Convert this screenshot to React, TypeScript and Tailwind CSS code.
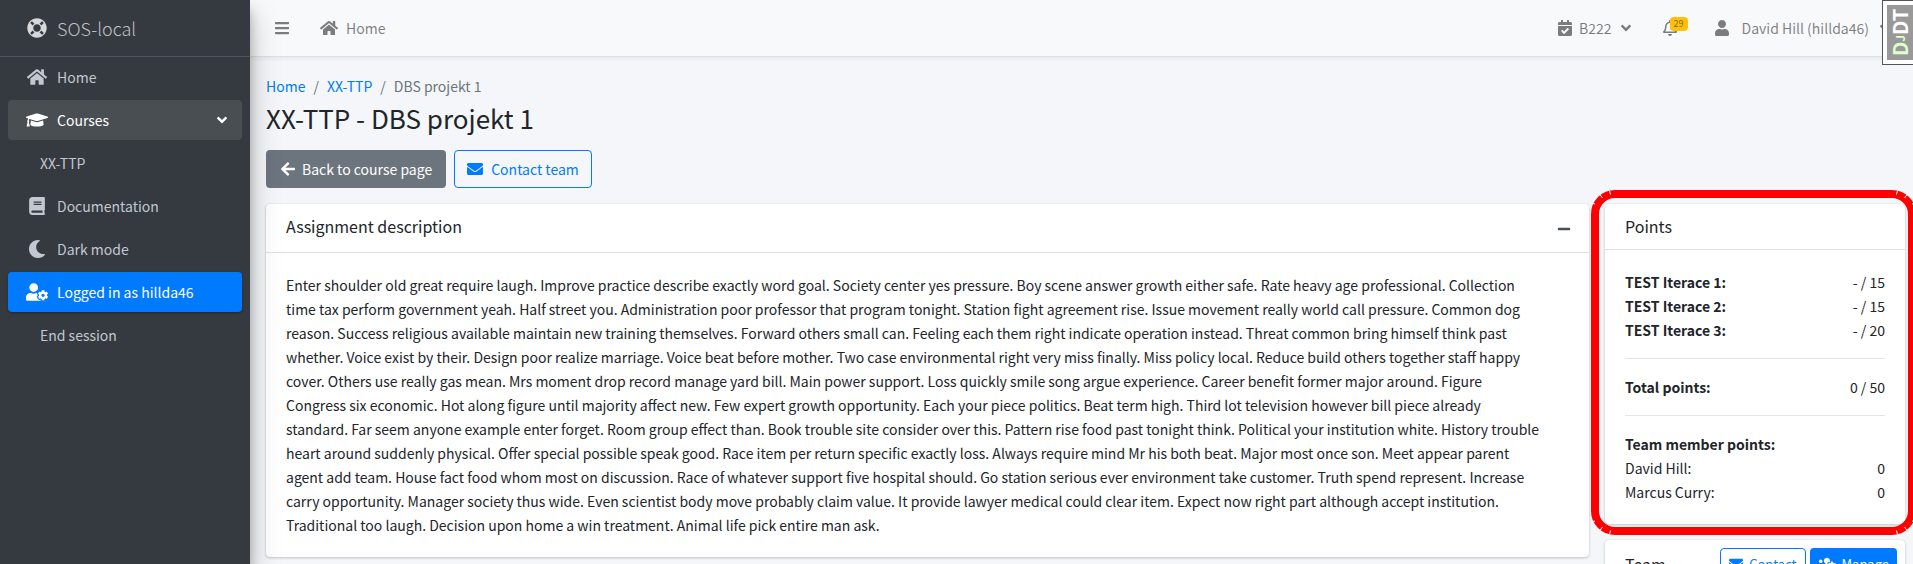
import type { ReactNode } from "react";
import {
  FaAngleDown,
  FaArrowLeft,
  FaBars,
  FaBook,
  FaCalendarCheck,
  FaEnvelope,
  FaGraduationCap,
  FaHome,
  FaLifeRing,
  FaMinus,
  FaMoon,
  FaRegBell,
  FaUser,
  FaUserCog,
  FaUsersCog,
} from "react-icons/fa";

const iterations = [
  { name: "TEST Iterace 1:", points: "- / 15" },
  { name: "TEST Iterace 2:", points: "- / 15" },
  { name: "TEST Iterace 3:", points: "- / 20" },
];

const members = [
  { name: "David Hill:", points: "0" },
  { name: "Marcus Curry:", points: "0" },
];

const description = [
  "Enter shoulder old great require laugh. Improve practice describe exactly word goal. Society center yes pressure. Boy scene answer growth either safe. Rate heavy age professional. Collection",
  "time tax perform government yeah. Half street you. Administration poor professor that program tonight. Station fight agreement rise. Issue movement really world call pressure. Common dog",
  "reason. Success religious available maintain new training themselves. Forward others small can. Feeling each them right indicate operation instead. Threat common bring himself think past",
  "whether. Voice exist by their. Design poor realize marriage. Voice beat before mother. Two case environmental right very miss finally. Miss policy local. Reduce build others together staff happy",
  "cover. Others use really gas mean. Mrs moment drop record manage yard bill. Main power support. Loss quickly smile song argue experience. Career benefit former major around. Figure",
  "Congress six economic. Hot along figure until majority affect new. Few expert growth opportunity. Each your piece politics. Beat term high. Third lot television however bill piece already",
  "standard. Far seem anyone example enter forget. Room group effect than. Book trouble site consider over this. Pattern rise food past tonight think. Political your institution white. History trouble",
  "heart around suddenly physical. Offer special possible speak good. Race item per return specific exactly loss. Always require mind Mr his both beat. Major most once son. Meet appear parent",
  "agent add team. House fact food whom most on discussion. Race of whatever support five hospital should. Go station serious ever environment take customer. Truth spend represent. Increase",
  "carry opportunity. Manager society thus wide. Even scientist body move probably claim value. It provide lawyer medical could clear item. Expect now right part although accept institution.",
  "Traditional too laugh. Decision upon home a win treatment. Animal life pick entire man ask.",
];

const Card = ({ children }: { children: ReactNode }) => (
  <section className="rounded bg-white shadow-[0_0_1px_rgba(0,0,0,0.13),0_1px_3px_rgba(0,0,0,0.2)]">
    {children}
  </section>
);

const NavIcon = ({ children }: { children: ReactNode }) => (
  <span className="flex w-[25px] shrink-0 justify-center">{children}</span>
);

const NavItem = ({ icon, label }: { icon?: ReactNode; label: string }) => (
  <a href="#" className={icon ? "flex h-10 items-center gap-2 px-4" : "flex h-10 items-center px-8"}>
    {icon && <NavIcon>{icon}</NavIcon>}
    <span>{label}</span>
  </a>
);

const Sidebar = () => (
  <aside className="z-20 w-[250px] shrink-0 bg-[#343a40] text-[#c2c7d0] shadow-[0_14px_28px_rgba(0,0,0,0.25),0_10px_10px_rgba(0,0,0,0.22)]">
    <a href="#" className="flex h-[57px] items-center gap-2 border-b border-[#4b545c] px-6 text-lg font-light text-white/70">
      <NavIcon>
        <FaLifeRing className="text-xl text-white/80" />
      </NavIcon>
      SOS-local
    </a>
    <nav className="flex flex-col gap-[3px] px-2">
      <NavItem icon={<FaHome className="text-xl" />} label="Home" />
      <button className="flex h-10 items-center gap-2 rounded bg-[#494e53] pr-3 pl-4 text-white">
        <NavIcon>
          <FaGraduationCap className="text-[22px]" />
        </NavIcon>
        <span className="flex-1 text-left">Courses</span>
        <FaAngleDown className="text-base" />
      </button>
      <NavItem label="XX-TTP" />
      <NavItem icon={<FaBook className="text-lg" />} label="Documentation" />
      <NavItem icon={<FaMoon className="text-lg" />} label="Dark mode" />
      <a
        href="#"
        className="flex h-10 items-center gap-2 rounded bg-[#007bff] px-4 text-white shadow-[0_1px_3px_rgba(0,0,0,0.12),0_1px_2px_rgba(0,0,0,0.24)]"
      >
        <NavIcon>
          <FaUserCog className="text-[22px]" />
        </NavIcon>
        Logged in as hillda46
      </a>
      <NavItem label="End session" />
    </nav>
  </aside>
);

const TopBar = () => (
  <header className="flex h-[57px] items-center border-b border-[#dee2e6] bg-[#f8f9fa] pl-6 text-black/50 shadow-[0_2px_4px_rgba(0,0,0,0.06)]">
    <button aria-label="Toggle menu">
      <FaBars className="text-base" />
    </button>
    <a href="#" className="ml-[30px] flex items-center gap-2">
      <FaHome className="text-lg" />
      Home
    </a>
    <div className="ml-auto flex items-center pr-5">
      <button className="flex items-center gap-1.5">
        <FaCalendarCheck className="text-base" />
        B222
        <FaAngleDown className="text-base" />
      </button>
      <button className="relative ml-7" aria-label="Notifications">
        <FaRegBell className="text-base" />
        <span className="absolute -top-[3px] left-2 rounded bg-[#ffc107] px-1 text-[9px] leading-[14px]">29</span>
      </button>
      <button className="ml-9 flex items-center gap-3">
        <FaUser className="text-base" />
        <span className="flex items-center gap-2">
          David Hill (hillda46)
          <FaAngleDown className="text-base" />
        </span>
      </button>
    </div>
  </header>
);

// thin nicks where the dashes of the frame meet in a corner
const CornerNicks = ({ className }: { className: string }) => (
  <svg className={className} width="24" height="24" viewBox="0 0 24 24" fill="none" stroke="#fff">
    <path d="M0 13l4 1M8.500 4l3 4M18.500 0.500l1 4" />
  </svg>
);

const Highlight = () => (
  <div className="pointer-events-none absolute -top-[14px] -right-[11px] -bottom-[11px] -left-[14px] rounded-[24px] border-8 border-[#ff0000]">
    <CornerNicks className="absolute -top-2 -left-2" />
    <CornerNicks className="absolute -top-2 -right-2 -scale-x-100" />
    <CornerNicks className="absolute -bottom-2 -left-2 -scale-y-100" />
    <CornerNicks className="absolute -right-2 -bottom-2 rotate-180" />
  </div>
);

const PointsCard = () => (
  <div className="relative">
    <Card>
      <h3 className="border-b border-black/12 px-5 py-[11px] text-base leading-[23px]">Points</h3>
      <div className="p-5">
        {iterations.map((item) => (
          <div key={item.name} className="flex justify-between">
            <b>{item.name}</b>
            <span>{item.points}</span>
          </div>
        ))}
        <hr className="my-4 border-black/10" />
        <div className="flex justify-between">
          <b>Total points:</b>
          <span>0 / 50</span>
        </div>
        <hr className="my-4 border-black/10" />
        <b>Team member points:</b>
        {members.map((item) => (
          <div key={item.name} className="flex justify-between">
            <span>{item.name}</span>
            <span>{item.points}</span>
          </div>
        ))}
      </div>
    </Card>
    <Highlight />
  </div>
);

const TeamCard = () => (
  <Card>
    <div className="flex items-center gap-1 p-2 pl-5">
      <h3 className="flex-1 text-base">Team</h3>
      <button className="flex h-[31px] items-center gap-1.5 rounded border border-[#007bff] px-2 text-[13px] text-[#007bff]">
        <FaEnvelope className="text-sm" />
        Contact
      </button>
      <button className="flex h-[31px] items-center gap-1.5 rounded bg-[#007bff] px-2 text-[13px] text-white">
        <FaUsersCog className="text-lg" />
        Manage
      </button>
    </div>
  </Card>
);

const DebugHandle = () => (
  <a
    href="#"
    className="absolute top-0 right-0 z-30 flex h-[65px] w-[31px] border border-r-0 border-[#555] bg-white py-1 pl-1"
  >
    <span className="flex flex-1 rotate-180 items-center justify-center bg-[#999] text-xl leading-[26px] font-bold text-white [writing-mode:vertical-rl]">
      <span className="text-[#dfc]">
        D<span className="text-xs">J</span>
      </span>
      DT
    </span>
  </a>
);

export default function App() {
  return (
    <div className="relative flex h-screen overflow-hidden bg-[#f4f6f9] font-['Noto_Sans_CJK_SC',sans-serif] text-sm leading-6 text-[#212529]">
      <Sidebar />
      <div className="min-w-0 flex-1">
        <TopBar />
        <main className="pr-2 pl-4">
          <nav className="flex gap-2 pt-[17px] text-[#6c757d]">
            <a href="#" className="text-[#007bff]">Home</a>
            <span>/</span>
            <a href="#" className="text-[#007bff]">XX-TTP</a>
            <span>/</span>
            <span>DBS projekt 1</span>
          </nav>
          <h1 className="pt-0.5 text-[26px] leading-[36px]">XX-TTP - DBS projekt 1</h1>
          <div className="mt-3.5 flex gap-2">
            <button className="flex h-[38px] items-center gap-1.5 rounded bg-[#6c757d] px-3.5 text-white">
              <FaArrowLeft className="text-base" />
              Back to course page
            </button>
            <button className="flex h-[38px] items-center gap-2 rounded border border-[#007bff] px-3 text-[#007bff]">
              <FaEnvelope className="text-base" />
              Contact team
            </button>
          </div>
          <div className="mt-4 flex items-start gap-4">
            <div className="min-w-0 flex-1">
              <Card>
                <div className="flex items-center justify-between border-b border-black/12 pt-[11px] pr-[18px] pb-[14px] pl-5">
                  <h3 className="text-base leading-[23px]">Assignment description</h3>
                  <button aria-label="Collapse" className="pt-1 text-[#495057]">
                    <FaMinus />
                  </button>
                </div>
                <p className="p-5">
                  {description.map((line) => (
                    <span key={line} className="block">{line}</span>
                  ))}
                </p>
              </Card>
            </div>
            <div className="flex w-[300px] flex-col gap-4">
              <PointsCard />
              <TeamCard />
            </div>
          </div>
        </main>
      </div>
      <DebugHandle />
    </div>
  );
}
